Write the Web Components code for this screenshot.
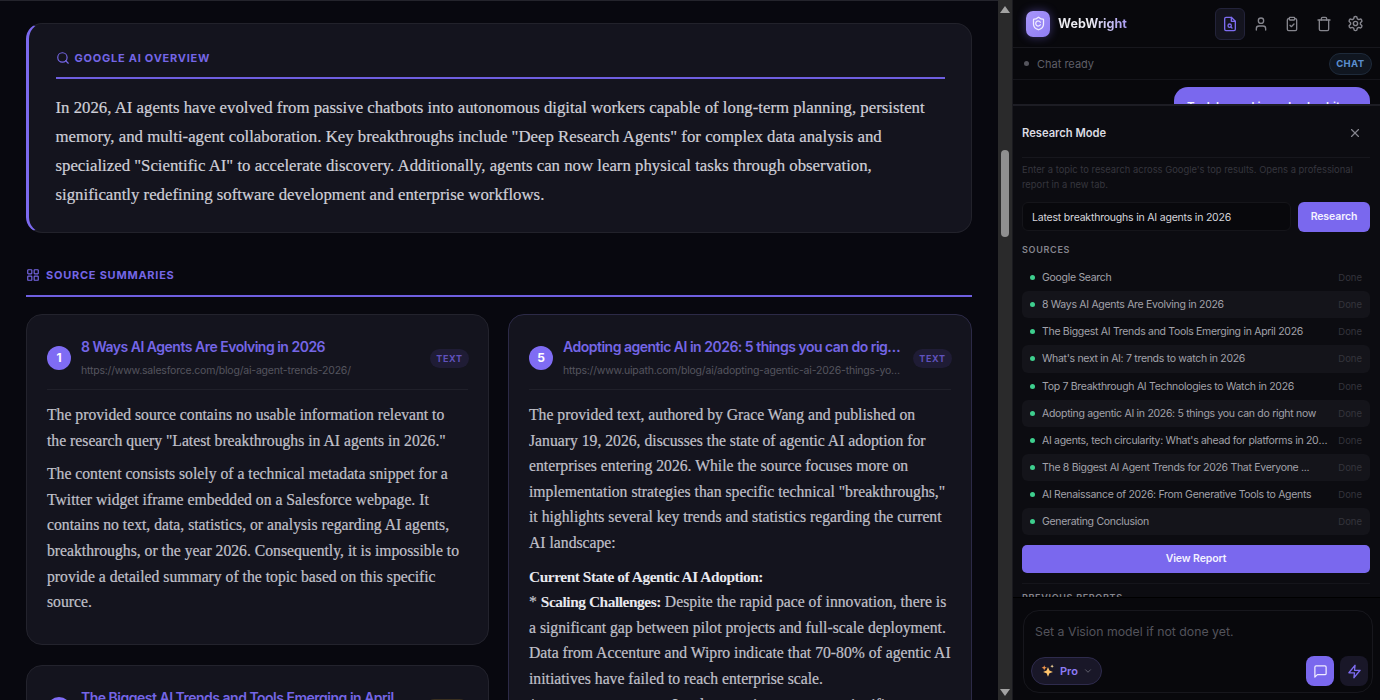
<!DOCTYPE html>
<html>
<head>
<meta charset="utf-8">
<title>WebWright</title>
<style>
  html, body { margin: 0; height: 100%; background: #08080f; overflow: hidden; }
  body { font-family: Inter, sans-serif; }
  source-card b { font-size: 15.4px; letter-spacing: -.45px; color: #e8e8ee; -webkit-text-stroke: 0; }
</style>
</head>
<body>
<app-shell>
  <report-page slot="page">
    <ai-overview></ai-overview>
    <section-head>SOURCE SUMMARIES</section-head>
  </report-page>
  <fake-scrollbar slot="bar"></fake-scrollbar>
  <side-panel slot="side"></side-panel>
</app-shell>

<script>
const serif = `"Liberation Serif", serif`;
const svg = (inner, size = 16, extra = '') =>
  `<svg width="${size}" height="${size}" viewBox="0 0 24 24" fill="none" stroke="currentColor" stroke-width="2" stroke-linecap="round" stroke-linejoin="round" ${extra}>${inner}</svg>`;

const icons = {
  search: '<circle cx="11" cy="11" r="8"/><path d="m21 21-4.3-4.3"/>',
  grid: '<rect x="3" y="3" width="7" height="7" rx="1"/><rect x="14" y="3" width="7" height="7" rx="1"/><rect x="14" y="14" width="7" height="7" rx="1"/><rect x="3" y="14" width="7" height="7" rx="1"/>',
  fileSearch: '<path d="M14 2H6a2 2 0 0 0-2 2v16a2 2 0 0 0 2 2h12a2 2 0 0 0 2-2V8z"/><path d="M14 2v6h6"/><circle cx="11.5" cy="14.5" r="2.5"/><path d="m13.3 16.3 1.7 1.7"/>',
  user: '<path d="M19 21v-2a4 4 0 0 0-4-4H9a4 4 0 0 0-4 4v2"/><circle cx="12" cy="7" r="4"/>',
  clipboard: '<rect x="8" y="2" width="8" height="4" rx="1"/><path d="M16 4h1a2 2 0 0 1 2 2v14a2 2 0 0 1-2 2H7a2 2 0 0 1-2-2V6a2 2 0 0 1 2-2h1"/><path d="m9 14 2 2 4-4"/>',
  trash: '<path d="M3 6h18"/><path d="M19 6v14a2 2 0 0 1-2 2H7a2 2 0 0 1-2-2V6"/><path d="M8 6V4a2 2 0 0 1 2-2h4a2 2 0 0 1 2 2v2"/>',
  gear: '<path d="M12.22 2h-.44a2 2 0 0 0-2 2v.18a2 2 0 0 1-1 1.73l-.43.25a2 2 0 0 1-2 0l-.15-.08a2 2 0 0 0-2.73.73l-.22.38a2 2 0 0 0 .73 2.73l.15.1a2 2 0 0 1 1 1.72v.51a2 2 0 0 1-1 1.74l-.15.09a2 2 0 0 0-.73 2.73l.22.38a2 2 0 0 0 2.73.73l.15-.08a2 2 0 0 1 2 0l.43.25a2 2 0 0 1 1 1.73V20a2 2 0 0 0 2 2h.44a2 2 0 0 0 2-2v-.18a2 2 0 0 1 1-1.73l.43-.25a2 2 0 0 1 2 0l.15.08a2 2 0 0 0 2.73-.73l.22-.39a2 2 0 0 0-.73-2.73l-.15-.08a2 2 0 0 1-1-1.74v-.5a2 2 0 0 1 1-1.74l.15-.09a2 2 0 0 0 .73-2.73l-.22-.38a2 2 0 0 0-2.73-.73l-.15.08a2 2 0 0 1-2 0l-.43-.25a2 2 0 0 1-1-1.73V4a2 2 0 0 0-2-2z"/><circle cx="12" cy="12" r="3"/>',
  x: '<path d="M18 6 6 18"/><path d="m6 6 12 12"/>',
  chat: '<path d="M21 15a2 2 0 0 1-2 2H7l-4 4V5a2 2 0 0 1 2-2h14a2 2 0 0 1 2 2z"/>',
  zap: '<path d="M13 2 3 14h9l-1 8 10-12h-9l1-8z"/>',
  chevron: '<path d="m6 9 6 6 6-6"/>',
  shield: '<path d="M20 13c0 5-3.5 7.5-7.66 8.95a1 1 0 0 1-.67-.01C7.5 20.5 4 18 4 13V6a1 1 0 0 1 1-1c2 0 4.5-1.2 6.24-2.72a1.17 1.17 0 0 1 1.52 0C14.51 3.81 17 5 19 5a1 1 0 0 1 1 1z"/><path d="M15 14a4 4 0 1 1 0-4"/>'
};

// shell: page column, scrollbar, side panel
class AppShell extends HTMLElement {
  constructor() {
    super();
    this.attachShadow({mode: 'open'}).innerHTML = `
    <style>
      :host { display: flex; width: 1380px; height: 700px; overflow: hidden; background: #08080f; }
      .page { flex: 0 0 998px; width: 998px; height: 700px; overflow: hidden; }
      .bar { flex: 0 0 15px; height: 700px; }
      .side { flex: 1; min-width: 0; height: 700px; }
    </style>
    <div class="page"><slot name="page"></slot></div>
    <div class="bar"><slot name="bar"></slot></div>
    <div class="side"><slot name="side"></slot></div>`;
  }
}

class FakeScrollbar extends HTMLElement {
  constructor() {
    super();
    this.attachShadow({mode: 'open'}).innerHTML = `
    <style>
      :host { display: flex; flex-direction: column; align-items: center; height: 700px; background: #2a2a2b; border-right: 1px solid #1a1a1f; box-sizing: border-box; }
      .up, .down { width: 0; height: 0; border-left: 5px solid transparent; border-right: 5px solid transparent; }
      .up { border-bottom: 7px solid #a3a3a3; margin-top: 6px; }
      .down { border-top: 7px solid #a3a3a3; margin-bottom: 4px; }
      .thumb { width: 8px; height: 87px; border-radius: 4px; background: #8f8f90; margin-top: 137px; }
      .fill { flex: 1; }
    </style>
    <div class="up"></div><div class="thumb"></div><div class="fill"></div><div class="down"></div>`;
  }
}

class ReportPage extends HTMLElement {
  constructor() {
    super();
    this.attachShadow({mode: 'open'}).innerHTML = `
    <style>
      :host { display: block; padding: 23px 26px 0 26px; box-sizing: border-box; width: 998px; border-top: 1px solid #24242c; background: #08080f; }
      .cols { display: flex; gap: 19px; align-items: flex-start; }
      .col { display: flex; flex-direction: column; gap: 20px; width: 463px; flex: none; }
      .col + .col { width: 464px; }
    </style>
    <slot></slot>
    <div class="cols">
      <div class="col"><slot name="left"></slot></div>
      <div class="col"><slot name="right"></slot></div>
    </div>`;
  }
}

class AiOverview extends HTMLElement {
  constructor() {
    super();
    this.attachShadow({mode: 'open'}).innerHTML = `
    <style>
      :host { display: block; height: 210px; box-sizing: border-box; margin-top: -1px; padding: 26px 26.5px 0 26.5px; background: #14141e; border: 1px solid #22222b; border-left: 3px solid #7c6af0; border-radius: 16px; }
      .head { display: flex; align-items: center; gap: 5px; height: 16px; padding-bottom: 11px; border-bottom: 2px solid #6f5fe0; color: #7566e6; font: 700 11px Inter, sans-serif; letter-spacing: .75px; }
      svg { flex: none; }
      p { margin: 14px 0 0; font: 16.8px/29px ${serif}; color: #cfcfd8; -webkit-text-stroke: .2px #cfcfd8; }
    </style>
    <div class="head">${svg(icons.search, 14)}GOOGLE AI OVERVIEW</div>
    <p>In 2026, AI agents have evolved from passive chatbots into autonomous digital workers capable of long-term planning, persistent memory, and multi-agent collaboration. Key breakthroughs include "Deep Research Agents" for complex data analysis and specialized "Scientific AI" to accelerate discovery. Additionally, agents can now learn physical tasks through observation, significantly redefining software development and enterprise workflows.</p>`;
  }
}

class SectionHead extends HTMLElement {
  constructor() {
    super();
    this.attachShadow({mode: 'open'}).innerHTML = `
    <style>
      :host { display: flex; align-items: center; gap: 6px; box-sizing: border-box; margin-top: 34px; margin-bottom: 17px; height: 30px; padding-bottom: 12px; border-bottom: 2px solid #6f5fe0; color: #7566e6; font: 700 11px Inter, sans-serif; letter-spacing: .75px; }
    </style>
    ${svg(icons.grid, 14)}<slot></slot>`;
  }
}

class SourceCard extends HTMLElement {
  constructor() {
    super();
    const num = this.getAttribute('num');
    const title = this.getAttribute('heading');
    const url = this.getAttribute('url');
    const amber = this.hasAttribute('amber');
    this.attachShadow({mode: 'open'}).innerHTML = `
    <style>
      :host { display: block; box-sizing: border-box; padding: 22px 20px 21px; background: #14141e; border: 1px solid #23232d; border-radius: 16px; }
      :host([active]) { border-color: #2c2a47; }
      .top { display: flex; align-items: center; gap: 10px; padding-bottom: 10px; border-bottom: 1px solid #20202a; }
      .num { flex: none; width: 24px; height: 24px; border-radius: 50%; background: #7f6cf4; color: #fff; font: 700 12px/24px Inter, sans-serif; text-align: center; }
      .info { flex: 1; min-width: 0; }
      .title, .url { white-space: nowrap; overflow: hidden; text-overflow: ellipsis; }
      .title { color: #7566e6; font: 600 14px/20px Inter, sans-serif; letter-spacing: -.5px; }
      .url { color: #55555f; font: 10.5px/16px Inter, sans-serif; letter-spacing: -.2px; margin-top: 6px; }
      .tag { flex: none; padding: 0 6.5px; height: 19px; margin-right: -1px; border-radius: 10px; background: #1f1c35; color: #5f52bb; font: 700 9px/19px Inter, sans-serif; letter-spacing: .6px; }
      .tag.amber { background: #3a3020; color: #8a6b2a; padding: 0 9px; }
      .body { margin-top: 12px; font: 15.7px/25.6px ${serif}; color: #c0c0ca; -webkit-text-stroke: .2px #c0c0ca; }
      ::slotted(p) { margin: 0 0 8px; }
    </style>
    <div class="top">
      <div class="num">${num}</div>
      <div class="info"><div class="title">${title}</div><div class="url">${url}</div></div>
      <div class="tag ${amber ? 'amber' : ''}">TEXT</div>
    </div>
    <div class="body"><slot></slot></div>`;
  }
}

class ResearchStep extends HTMLElement {
  constructor() {
    super();
    this.attachShadow({mode: 'open'}).innerHTML = `
    <style>
      :host { display: flex; align-items: center; height: 27.15px; padding: 0 8px 0 8px; border-radius: 6px; font: 10.5px Inter, sans-serif; letter-spacing: -.3px; color: #a2a2aa; }
      :host(:nth-child(even)) { background: #14141a; }
      i { flex: none; width: 5px; height: 5px; border-radius: 50%; background: #3ecf8e; margin-right: 7px; }
      .t { width: 288px; white-space: nowrap; overflow: hidden; text-overflow: ellipsis; }
      .d { margin-left: auto; color: #34343c; font-size: 9.5px; letter-spacing: 0; }
    </style>
    <i></i><div class="t"><slot></slot></div><div class="d">Done</div>`;
  }
}

class ResearchOverlay extends HTMLElement {
  constructor() {
    super();
    const steps = ['Google Search', '8 Ways AI Agents Are Evolving in 2026', 'The Biggest AI Trends and Tools Emerging in April 2026',
      "What's next in AI: 7 trends to watch in 2026", 'Top 7 Breakthrough AI Technologies to Watch in 2026',
      'Adopting agentic AI in 2026: 5 things you can do right now', "AI agents, tech circularity: What's ahead for platforms in 2026",
      'The 8 Biggest AI Agent Trends for 2026 That Everyone ...', 'AI Renaissance of 2026: From Generative Tools to Agents', 'Generating Conclusion'];
    this.attachShadow({mode: 'open'}).innerHTML = `
    <style>
      :host { position: absolute; left: 0; right: 0; top: 104px; height: 494px; overflow: hidden; box-sizing: border-box; padding: 0 10px 0 9px; background: #0c0c11; border-top: 2px solid #1d1d24; border-bottom: 1px solid #000; }
      .head { display: flex; align-items: center; justify-content: space-between; height: 52px; box-sizing: border-box; padding-top: 2px; border-bottom: 1px solid #17171d; color: #dcdce2; font: 600 11.2px Inter, sans-serif; padding-right: 8px; }
      .head svg { color: #85858d; }
      .desc { margin: 5px 0 0; color: #36363e; font: 9.4px/14.5px Inter, sans-serif; }
      .form { display: flex; gap: 7px; margin-top: 10px; }
      .input { flex: 1; height: 29px; box-sizing: border-box; padding-left: 9px; border: 1px solid #15151a; border-radius: 6px; background: #08080c; color: #d6d6dc; font: 10.5px/29px Inter, sans-serif; letter-spacing: -.2px; }
      .btn { width: 72px; height: 30px; border-radius: 6px; background: #7a68ee; color: #f4f2ff; font: 600 10.5px/30px Inter, sans-serif; letter-spacing: -.1px; text-align: center; }
      .label { margin: 11px 0 7px; color: #85858d; font: 600 9px/14px Inter, sans-serif; letter-spacing: .7px; }
      .view { height: 28px; margin-top: 10px; border-radius: 5px; background: #7a68ee; color: #f4f2ff; font: 600 10.5px/28px Inter, sans-serif; letter-spacing: -.1px; text-align: center; }
      hr { border: 0; border-top: 1px solid #15151b; margin: 10px 0 0; }
      .prev { margin-top: 7px; color: #85858d; font: 600 9px/14px Inter, sans-serif; letter-spacing: .7px; }
    </style>
    <div class="head">Research Mode ${svg(icons.x, 14)}</div>
    <p class="desc">Enter a topic to research across Google's top results. Opens a professional report in a new tab.</p>
    <div class="form"><div class="input">Latest breakthroughs in AI agents in 2026</div><div class="btn">Research</div></div>
    <div class="label">SOURCES</div>
    <div class="steps">${steps.map(s => `<research-step>${s}</research-step>`).join('')}</div>
    <div class="view">View Report</div>
    <hr>
    <div class="prev">PREVIOUS REPORTS</div>`;
  }
}

class ChatInput extends HTMLElement {
  constructor() {
    super();
    this.attachShadow({mode: 'open'}).innerHTML = `
    <style>
      :host { display: block; height: 102px; box-sizing: border-box; padding: 12px 7px 7px 10px; background: #08080c; }
      .box { height: 83px; box-sizing: border-box; border: 1px solid #17171d; border-radius: 16px; padding: 12px 4px 6px 7px; display: flex; flex-direction: column; }
      .ph { padding-left: 4px; color: #53535b; font: 12.3px/18px Inter, sans-serif; }
      .row { margin-top: auto; display: flex; align-items: center; gap: 6px; }
      .pro { display: flex; align-items: center; gap: 5px; height: 26px; padding: 0 8px 0 9px; border-radius: 14px; border: 1px solid #2e2b4d; background: #191728; color: #8d7cf5; font: 600 11px Inter, sans-serif; }
      .pro svg:last-child { color: #6b6b78; }
      .gap { flex: 1; }
      .b { width: 28px; height: 30px; border-radius: 8px; display: flex; align-items: center; justify-content: center; background: #191728; color: #7d6cf0; }
      .b.on { background: #7a68ee; color: #efecff; }
    </style>
    <div class="box">
      <div class="ph">Set a Vision model if not done yet.</div>
      <div class="row">
        <div class="pro"><svg width="14" height="14" viewBox="0 0 24 24"><path fill="#ffc46b" d="M12 5l2.4 6.1L20.5 13.5l-6.1 2.4L12 22l-2.4-6.1L3.5 13.5l6.1-2.4z"/><path fill="#f5964a" d="M5.5 2l1.2 3.3L10 6.5 6.7 7.7 5.5 11 4.3 7.7 1 6.5l3.3-1.2z"/><path fill="#ffdf9e" d="M19 1l.9 2.1L22 4l-2.1.9L19 7l-.9-2.1L16 4l2.1-.9z"/></svg>Pro ${svg(icons.chevron, 10)}</div>
        <div class="gap"></div>
        <div class="b on">${svg(icons.chat, 15)}</div>
        <div class="b">${svg(icons.zap, 15)}</div>
      </div>
    </div>`;
  }
}

class SidePanel extends HTMLElement {
  constructor() {
    super();
    this.attachShadow({mode: 'open'}).innerHTML = `
    <style>
      :host { display: flex; flex-direction: column; position: relative; height: 700px; background: #08080c; overflow: hidden; }
      header { display: flex; align-items: center; height: 47px; flex: none; padding: 0 10px 0 13px; border-bottom: 1px solid #17171d; }
      .logo { width: 24px; height: 26px; border-radius: 7px; background: linear-gradient(135deg, #a896fa, #8f7df4); color: #efecff; display: flex; align-items: center; justify-content: center; box-shadow: 0 0 10px rgba(124,106,240,.45); }
      .name { margin-left: 8px; font: 700 12.6px Inter, sans-serif; background: linear-gradient(90deg, #ececf2 45%, #a99bf2); -webkit-background-clip: text; background-clip: text; color: transparent; }
      .tools { margin-left: auto; display: flex; align-items: center; gap: 1.4px; color: #85858d; }
      .tool { width: 30px; height: 32px; display: flex; align-items: center; justify-content: center; }
      .tool.on { color: #7d6cf0; background: #14141f; border: 1px solid #23233a; border-radius: 6px; box-sizing: border-box; margin-right: -1px; }
      .status { display: flex; align-items: center; height: 31px; flex: none; padding: 0 8px 0 11px; border-bottom: 1px solid #15151b; color: #5f5f67; font: 11px Inter, sans-serif; }
      .status i { width: 5px; height: 5px; border-radius: 50%; background: #55555d; margin-right: 8px; }
      .chat { margin-left: auto; height: 20px; padding: 0 6.5px; border-radius: 11px; border: 1px solid #1e2a3a; background: #101620; color: #5b8fd0; font: 700 9.5px/20px Inter, sans-serif; letter-spacing: .4px; }
      .msgs { flex: 1; min-height: 0; padding: 7px 10px 0 0; display: flex; justify-content: flex-end; }
      .bubble { width: 196px; height: 60px; border-radius: 14px; background: #7a68ee; color: #f4f2ff; box-sizing: border-box; padding: 13px 13px; font: 600 11.5px/14px Inter, sans-serif; white-space: nowrap; overflow: hidden; }
    </style>
    <header>
      <div class="logo">${svg(icons.shield, 15)}</div>
      <div class="name">WebWright</div>
      <div class="tools">
        <div class="tool on">${svg(icons.fileSearch, 16)}</div>
        <div class="tool">${svg(icons.user, 16)}</div>
        <div class="tool">${svg(icons.clipboard, 16)}</div>
        <div class="tool">${svg(icons.trash, 16)}</div>
        <div class="tool">${svg(icons.gear, 17)}</div>
      </div>
    </header>
    <div class="status"><i></i>Chat ready<span class="chat">CHAT</span></div>
    <div class="msgs"><div class="bubble">Task logged in and ask a bit</div></div>
    <chat-input></chat-input>
    <research-overlay></research-overlay>`;
  }
}

customElements.define('section-head', SectionHead);
customElements.define('ai-overview', AiOverview);
customElements.define('source-card', SourceCard);
customElements.define('research-step', ResearchStep);
customElements.define('research-overlay', ResearchOverlay);
customElements.define('chat-input', ChatInput);
customElements.define('side-panel', SidePanel);
customElements.define('fake-scrollbar', FakeScrollbar);
customElements.define('report-page', ReportPage);
customElements.define('app-shell', AppShell);

// cards are filled in from data
const page = document.querySelector('report-page');
const card = (slot, num, heading, url, html, extra = '') => {
  const c = document.createElement('div');
  c.innerHTML = `<source-card slot="${slot}" num="${num}" heading="${heading}" url="${url}" ${extra}>${html}</source-card>`;
  page.appendChild(c.firstElementChild);
};
card('left', 1, '8 Ways AI Agents Are Evolving in 2026', 'https://www.salesforce.com/blog/ai-agent-trends-2026/',
  `<p>The provided source contains no usable information relevant to<br>the research query "Latest breakthroughs in AI agents in 2026."</p>
   <p>The content consists solely of a technical metadata snippet for a Twitter widget iframe embedded on a Salesforce webpage. It contains no text, data, statistics, or analysis regarding AI agents, breakthroughs, or the year 2026. Consequently, it is impossible to provide a detailed summary of the topic based on this specific source.</p>`);
card('left', 2, 'The Biggest AI Trends and Tools Emerging in April ...', 'https://example.com/', `<p></p>`, 'amber');
card('right', 5, 'Adopting agentic AI in 2026: 5 things you can do right now', 'https://www.uipath.com/blog/ai/adopting-agentic-ai-2026-things-you-can-do-right-now',
  `<p>The provided text, authored by Grace Wang and published on January 19, 2026, discusses the state of agentic AI adoption for enterprises entering 2026. While the source focuses more on implementation strategies than specific technical "breakthroughs," it highlights several key trends and statistics regarding the current AI landscape:</p>
   <p style="margin:0"><b>Current State of Agentic AI Adoption:</b><br>* <b>Scaling Challenges:</b> Despite the rapid pace of innovation, there is a significant gap between pilot projects and full-scale deployment. Data from Accenture and Wipro indicate that 70-80% of agentic AI initiatives have failed to reach enterprise scale.<br>* <b>Investment Outlook:</b> Leaders continue to expect significant returns.</p>`, 'active');
</script>
</body>
</html>
